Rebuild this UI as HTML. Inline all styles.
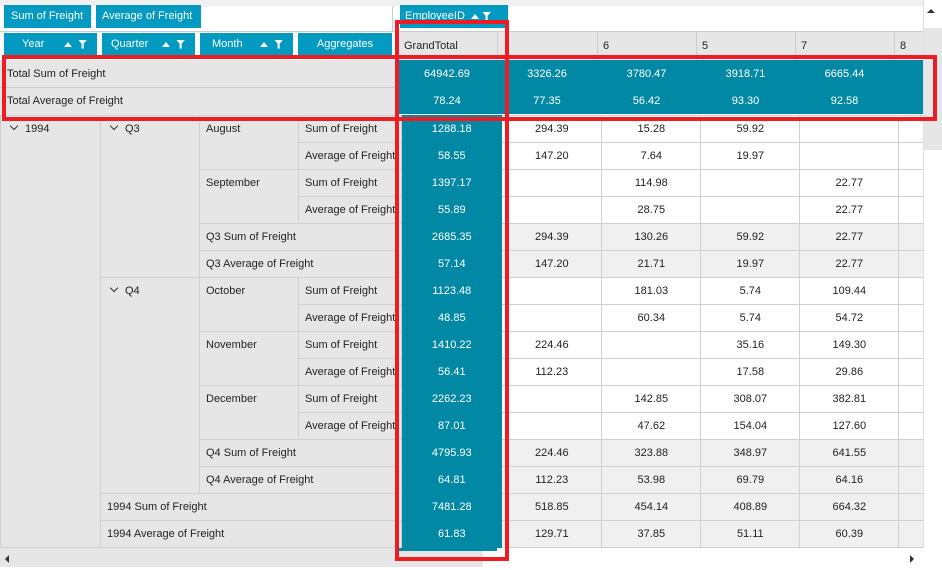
<!DOCTYPE html>
<html><head><style>
*{box-sizing:border-box;margin:0;padding:0}
body{width:942px;height:570px;overflow:hidden;background:#fff;font-family:"Liberation Sans",sans-serif;font-size:11px;color:#222;position:relative}
.a{position:absolute}
.btn{position:absolute;background:#029ac0;color:#fff;height:23px;line-height:23px;font-size:11px;white-space:nowrap}
.tri{display:inline-block;width:0;height:0;border-left:4px solid transparent;border-right:4px solid transparent;border-bottom:5px solid #fff;vertical-align:middle}
.fil{display:inline-block;width:9px;height:9px;vertical-align:middle;background:#fff;clip-path:polygon(0 0,100% 0,62% 45%,62% 100%,38% 100%,38% 45%)}
table{position:absolute;left:0;top:115px;border-collapse:collapse;table-layout:fixed}
td{height:27px;border:1px solid #d0d0d0;padding:0 6px;white-space:nowrap;overflow:hidden;font-size:11px}
td.h{background:#e6e6e6;vertical-align:top;padding-top:7px}
td.hs{background:#e6e6e6}
td.g{background:#0088a4;color:#fff;text-align:center;border-color:#0088a4}
td.v{text-align:center;background:#fff}
tr.s td.v{background:#f0f0f0}
.chev{display:inline-block;width:6px;height:6px;border-right:1.5px solid #333;border-bottom:1.5px solid #333;transform:rotate(45deg);margin:0 8px 3px 4px}
.red{position:absolute;border:4px solid #ee1c25}
</style></head><body>
<div class="a" style="left:0;top:0;width:923px;height:6px;background:#f0f0f0"></div>
<div class="a" style="left:392px;top:6px;width:1px;height:26px;background:#ccc"></div>
<div class="btn" style="left:4px;top:5px;width:87px;padding-left:7px">Sum of Freight</div>
<div class="btn" style="left:96px;top:5px;width:105px;padding-left:6px">Average of Freight</div>
<div class="btn" style="left:400px;top:5px;width:108px;padding-left:5px">EmployeeID &nbsp;<span class="tri"></span> <span class="fil"></span></div>
<div class="a" style="left:0;top:31px;width:923px;height:1px;background:#ccc"></div>
<div class="btn" style="left:4px;top:33px;width:93px;height:22px;padding-left:18px">Year<span style="position:absolute;left:60px"><span class="tri"></span> &nbsp;<span class="fil"></span></span></div>
<div class="btn" style="left:102px;top:33px;width:93px;height:22px;padding-left:9px">Quarter<span style="position:absolute;left:60px"><span class="tri"></span> &nbsp;<span class="fil"></span></span></div>
<div class="btn" style="left:200px;top:33px;width:93px;height:22px;padding-left:12px">Month<span style="position:absolute;left:60px"><span class="tri"></span> &nbsp;<span class="fil"></span></span></div>
<div class="btn" style="left:298px;top:33px;width:94px;height:22px;text-align:center">Aggregates</div>
<div class="a" style="left:397px;top:32px;width:526px;height:28px;background:#e6e6e6"></div>
<div class="a" style="left:404px;top:40px">GrandTotal</div>
<div class="a" style="left:497px;top:32px;width:1px;height:28px;background:#ccc"></div>
<div class="a" style="left:597px;top:32px;width:1px;height:28px;background:#ccc"></div>
<div class="a" style="left:696px;top:32px;width:1px;height:28px;background:#ccc"></div>
<div class="a" style="left:795px;top:32px;width:1px;height:28px;background:#ccc"></div>
<div class="a" style="left:894px;top:32px;width:1px;height:28px;background:#ccc"></div>
<div class="a" style="left:603px;top:40px">6</div>
<div class="a" style="left:702px;top:40px">5</div>
<div class="a" style="left:801px;top:40px">7</div>
<div class="a" style="left:900px;top:40px">8</div>
<div class="a" style="left:0;top:60px;width:397px;height:55px;background:#e6e6e6"></div>
<div class="a" style="left:0;top:87px;width:397px;height:1px;background:#ccc"></div>
<div class="a" style="left:7px;top:68px">Total Sum of Freight</div>
<div class="a" style="left:7px;top:95px">Total Average of Freight</div>
<div class="a" style="left:397px;top:60px;width:526px;height:54px;background:#0088a4"></div>
<div class="a" style="left:397px;top:68px;width:500px;color:#fff;display:flex"><span style="width:100px;text-align:center">64942.69</span><span style="width:100px;text-align:center">3326.26</span><span style="width:99px;text-align:center">3780.47</span><span style="width:99px;text-align:center">3918.71</span><span style="width:99px;text-align:center">6665.44</span></div>
<div class="a" style="left:397px;top:95px;width:500px;color:#fff;display:flex"><span style="width:100px;text-align:center">78.24</span><span style="width:100px;text-align:center">77.35</span><span style="width:99px;text-align:center">56.42</span><span style="width:99px;text-align:center">93.30</span><span style="width:99px;text-align:center">92.58</span></div>
<table>
<colgroup><col style="width:100px"><col style="width:99px"><col style="width:99px"><col style="width:99px"><col style="width:100px"><col style="width:100px"><col style="width:99px"><col style="width:99px"><col style="width:99px"><col style="width:29px"></colgroup>
<tr><td class="h" rowspan="17"><span class="chev"></span>1994</td><td class="h" rowspan="6"><span class="chev"></span>Q3</td><td class="h" rowspan="2">August</td><td class="hs">Sum of Freight</td><td class="g">1288.18</td><td class="v">294.39</td><td class="v">15.28</td><td class="v">59.92</td><td class="v"></td><td class="v"></td></tr>
<tr><td class="hs">Average of Freight</td><td class="g">58.55</td><td class="v">147.20</td><td class="v">7.64</td><td class="v">19.97</td><td class="v"></td><td class="v"></td></tr>
<tr><td class="h" rowspan="2">September</td><td class="hs">Sum of Freight</td><td class="g">1397.17</td><td class="v"></td><td class="v">114.98</td><td class="v"></td><td class="v">22.77</td><td class="v"></td></tr>
<tr><td class="hs">Average of Freight</td><td class="g">55.89</td><td class="v"></td><td class="v">28.75</td><td class="v"></td><td class="v">22.77</td><td class="v"></td></tr>
<tr class="s"><td class="hs" colspan="2">Q3 Sum of Freight</td><td class="g">2685.35</td><td class="v">294.39</td><td class="v">130.26</td><td class="v">59.92</td><td class="v">22.77</td><td class="v"></td></tr>
<tr class="s"><td class="hs" colspan="2">Q3 Average of Freight</td><td class="g">57.14</td><td class="v">147.20</td><td class="v">21.71</td><td class="v">19.97</td><td class="v">22.77</td><td class="v"></td></tr>
<tr><td class="h" rowspan="8"><span class="chev"></span>Q4</td><td class="h" rowspan="2">October</td><td class="hs">Sum of Freight</td><td class="g">1123.48</td><td class="v"></td><td class="v">181.03</td><td class="v">5.74</td><td class="v">109.44</td><td class="v"></td></tr>
<tr><td class="hs">Average of Freight</td><td class="g">48.85</td><td class="v"></td><td class="v">60.34</td><td class="v">5.74</td><td class="v">54.72</td><td class="v"></td></tr>
<tr><td class="h" rowspan="2">November</td><td class="hs">Sum of Freight</td><td class="g">1410.22</td><td class="v">224.46</td><td class="v"></td><td class="v">35.16</td><td class="v">149.30</td><td class="v"></td></tr>
<tr><td class="hs">Average of Freight</td><td class="g">56.41</td><td class="v">112.23</td><td class="v"></td><td class="v">17.58</td><td class="v">29.86</td><td class="v"></td></tr>
<tr><td class="h" rowspan="2">December</td><td class="hs">Sum of Freight</td><td class="g">2262.23</td><td class="v"></td><td class="v">142.85</td><td class="v">308.07</td><td class="v">382.81</td><td class="v"></td></tr>
<tr><td class="hs">Average of Freight</td><td class="g">87.01</td><td class="v"></td><td class="v">47.62</td><td class="v">154.04</td><td class="v">127.60</td><td class="v"></td></tr>
<tr class="s"><td class="hs" colspan="2">Q4 Sum of Freight</td><td class="g">4795.93</td><td class="v">224.46</td><td class="v">323.88</td><td class="v">348.97</td><td class="v">641.55</td><td class="v"></td></tr>
<tr class="s"><td class="hs" colspan="2">Q4 Average of Freight</td><td class="g">64.81</td><td class="v">112.23</td><td class="v">53.98</td><td class="v">69.79</td><td class="v">64.16</td><td class="v"></td></tr>
<tr class="s"><td class="hs" colspan="3">1994 Sum of Freight</td><td class="g">7481.28</td><td class="v">518.85</td><td class="v">454.14</td><td class="v">408.89</td><td class="v">664.32</td><td class="v"></td></tr>
<tr class="s"><td class="hs" colspan="3">1994 Average of Freight</td><td class="g">61.83</td><td class="v">129.71</td><td class="v">37.85</td><td class="v">51.11</td><td class="v">60.39</td><td class="v"></td></tr>
</table>
<div class="a" style="left:0;top:548px;width:942px;height:22px;background:#fff"></div>
<div class="a" style="left:0;top:548px;width:397px;height:3px;background:#e6e6e6"></div>
<div class="a" style="left:399px;top:548px;width:98px;height:3px;background:#0088a4"></div>
<div class="a" style="left:0;top:551px;width:483px;height:16px;background:#e6e6e6"></div>
<div class="a" style="left:5px;top:555px;width:0;height:0;border-top:4px solid transparent;border-bottom:4px solid transparent;border-right:4px solid #333"></div>
<div class="a" style="left:910px;top:555px;width:0;height:0;border-top:4px solid transparent;border-bottom:4px solid transparent;border-left:4px solid #333"></div>
<div class="a" style="left:923px;top:0;width:19px;height:548px;background:#fff;border-left:1px solid #e0e0e0"></div>
<div class="a" style="left:924px;top:28px;width:18px;height:122px;background:#e6e6e6"></div>
<div class="a" style="left:927px;top:9px;width:0;height:0;border-left:4px solid transparent;border-right:4px solid transparent;border-bottom:4px solid #333"></div>
<div class="a" style="left:513px;top:539px;width:0;height:0"></div>
<div class="red" style="left:2px;top:55px;width:935px;height:66px"></div>
<div class="red" style="left:395px;top:20px;width:114px;height:541px"></div>
</body></html>
